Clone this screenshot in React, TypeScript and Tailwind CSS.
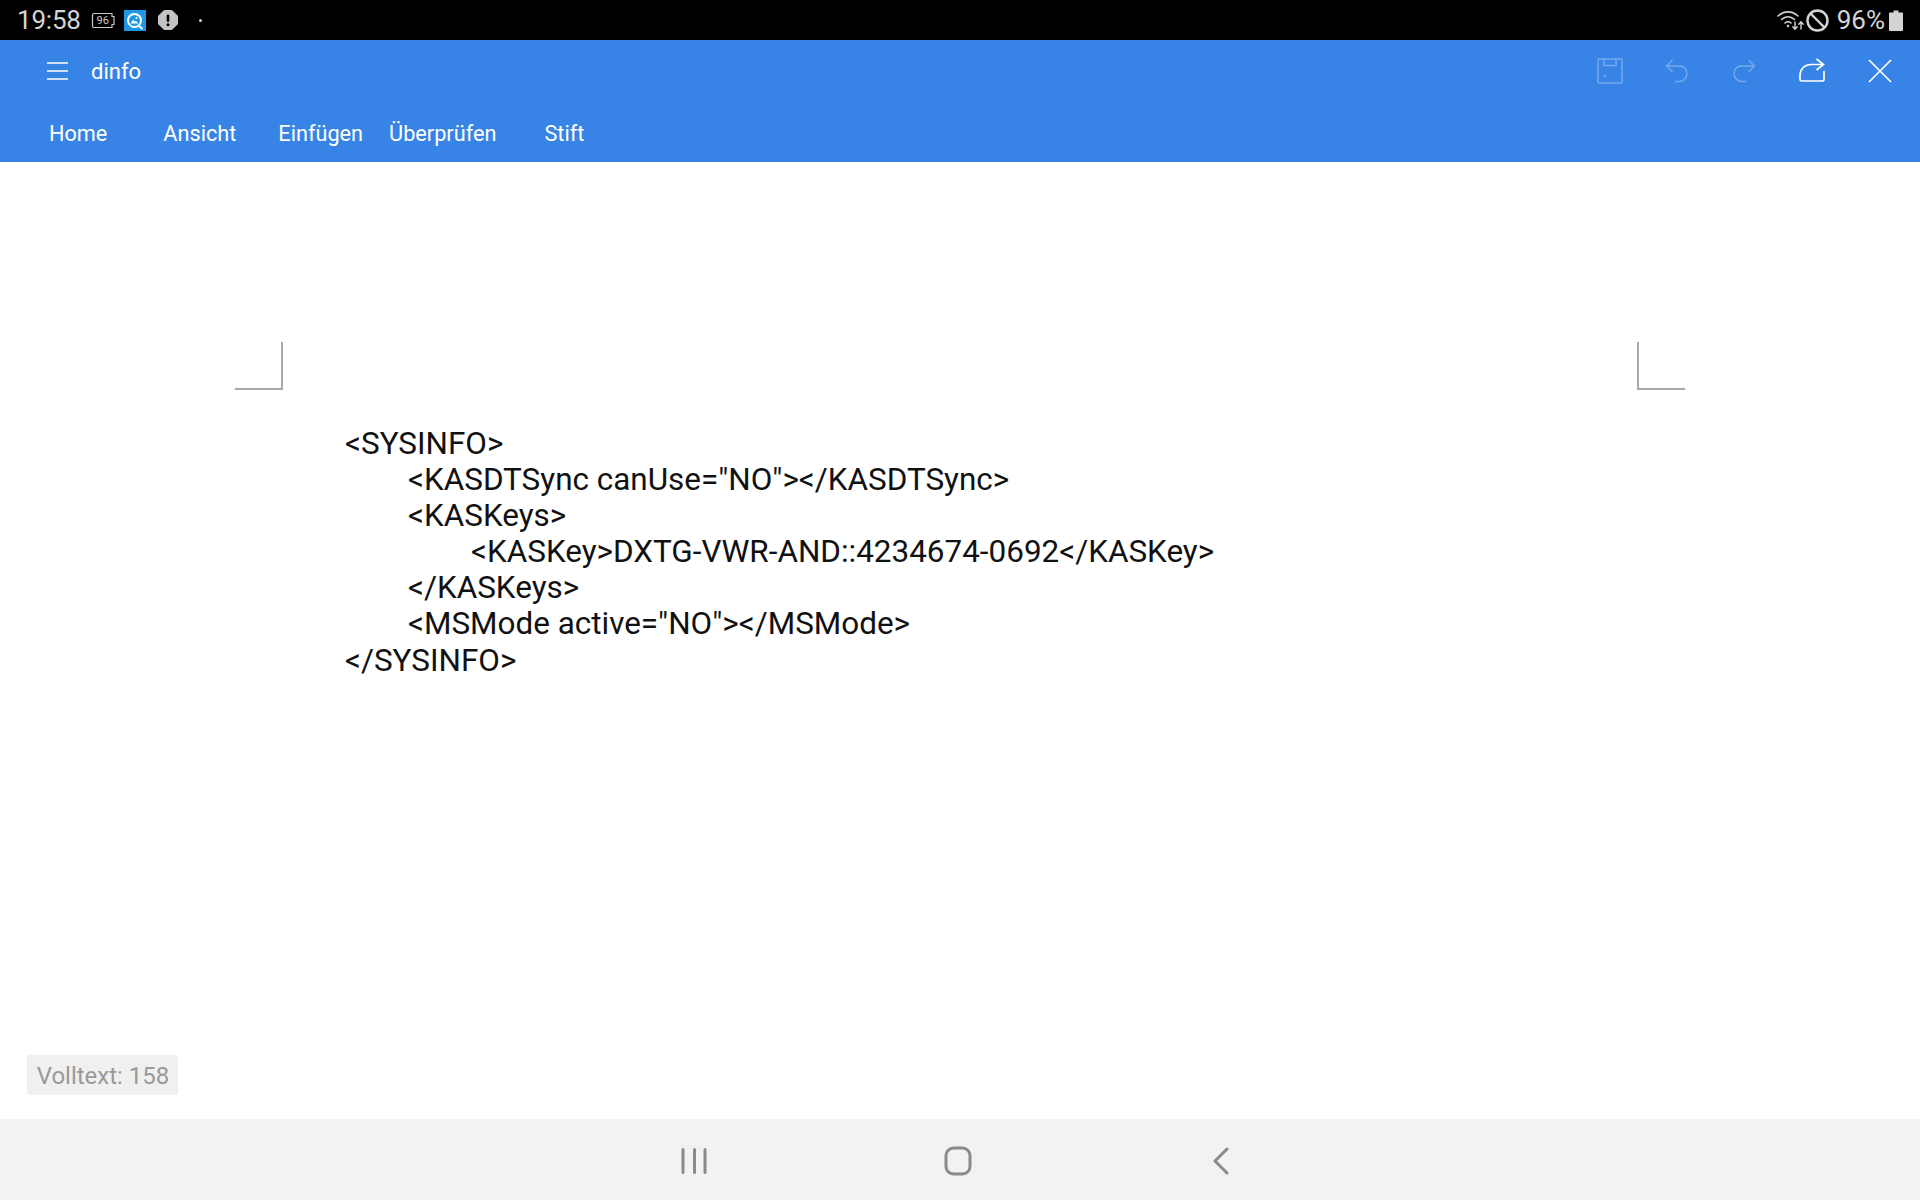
import React from "react";

const lines: [number, string][] = [
  [0, '<SYSINFO>'],
  [1, '<KASDTSync canUse="NO"></KASDTSync>'],
  [1, '<KASKeys>'],
  [2, '<KASKey>DXTG-VWR-AND::4234674-0692</KASKey>'],
  [1, '</KASKeys>'],
  [1, '<MSMode active="NO"></MSMode>'],
  [0, '</SYSINFO>'],
];

const indent = ["ml-0", "ml-[63px]", "ml-[126px]"];

function StatusLeft() {
  return (
    <div className="flex items-center">
      <span className="ml-[17px] text-[26px] leading-none text-[#d4d4d4] tracking-[-0.2px]">19:58</span>
      <svg className="ml-[10px]" width="25" height="17" viewBox="0 0 25 17" fill="none">
        <path d="M3 1.5H21V4.5H23V12.5H21V15.5H3a1.5 1.5 0 0 1-1.5-1.5V3A1.5 1.5 0 0 1 3 1.5Z" stroke="#c8c8c8" strokeWidth="1.2" />
      </svg>
      <span className="ml-[-22px] w-[18px] text-center text-[11px] leading-none text-[#c8c8c8]">96</span>
      <div className="ml-[12px] w-[22px] h-[21px] bg-[#1f97e6] flex items-center justify-center">
        <svg width="19" height="19" viewBox="0 0 19 19" fill="none">
          <circle cx="9.5" cy="9.5" r="7.5" fill="#fff" />
          <circle cx="9.5" cy="9.5" r="5.5" fill="#1f97e6" />
          <path d="M5.5 12.5 8.2 8.8l1.5 2 1-1.2 2.5 2.9Z" fill="#fff" />
          <circle cx="11.5" cy="7" r="1" fill="#fff" />
          <path d="M14 15l3.5 3" stroke="#fff" strokeWidth="2" />
        </svg>
      </div>
      <svg className="ml-[12px]" width="20" height="20" viewBox="0 0 20 20">
        <path d="M6 0.5H14L19.5 6V14L14 19.5H6L0.5 14V6Z" fill="#c4c4c4" stroke="#c4c4c4" strokeLinejoin="round" />
        <rect x="8.7" y="4.5" width="2.6" height="7.5" rx="1.2" fill="#000" />
        <circle cx="10" cy="14.8" r="1.5" fill="#000" />
      </svg>
      <div className="ml-[21px] w-[3px] h-[3px] rounded-full bg-[#d4d4d4]" />
    </div>
  );
}

function StatusRight() {
  return (
    <div className="flex items-center">
      <svg width="28" height="22" viewBox="0 0 28 22" fill="none" stroke="#d4d4d4" strokeLinecap="round">
        <path d="M1 7C7 1.5 15 1.5 21 7" strokeWidth="1.6" />
        <path d="M4.5 10.5C8.5 7 13.5 7 17.5 10.5" strokeWidth="1.6" />
        <path d="M8 14c2-1.6 4-1.6 6 0" strokeWidth="1.6" />
        <circle cx="11" cy="17" r="1.2" fill="#d4d4d4" stroke="none" />
        <path d="M18 13v7M15.8 17.8l2.2 2.4 2.2-2.4" strokeWidth="1.4" />
        <path d="M24 20v-7M21.8 15.2l2.2-2.4 2.2 2.4" strokeWidth="1.4" />
      </svg>
      <svg className="ml-[1px]" width="23" height="23" viewBox="0 0 23 23" fill="none" stroke="#d4d4d4" strokeWidth="2.4">
        <circle cx="11.5" cy="11.5" r="10" />
        <path d="M4.5 4.5 18.5 18.5" />
      </svg>
      <span className="ml-[8px] text-[26px] leading-none text-[#d4d4d4]">96%</span>
      <svg className="ml-[4px]" width="14" height="21" viewBox="0 0 14 21">
        <path d="M4.5 0.5h5v2H13a1 1 0 0 1 1 1V20a1 1 0 0 1-1 1H1a1 1 0 0 1-1-1V3.5a1 1 0 0 1 1-1h3.5Z" fill="#d4d4d4" />
      </svg>
    </div>
  );
}

function Toolbar() {
  return (
    <div className="flex items-center h-[62px]">
      <svg className="ml-[47px]" width="21" height="20" viewBox="0 0 21 20" stroke="#fff" strokeWidth="1.6">
        <path d="M0 2H21M0 10H21M0 18H21" />
      </svg>
      <span className="ml-[23px] text-[22px] leading-none text-white pt-[1px]">dinfo</span>
      <div className="ml-auto flex items-center mr-[27px] gap-[41.5px]">
        <svg width="26" height="26" viewBox="0 0 26 26" fill="none" stroke="#76a9ed" strokeWidth="1.5">
          <rect x="1" y="1" width="24" height="24" rx="1" />
          <path d="M7 1V7.5H19V1" />
          <circle cx="8" cy="18" r="0.6" />
        </svg>
        <svg className="-ml-[1px]" width="26" height="24" viewBox="0 0 26 24" fill="none" stroke="#76a9ed" strokeWidth="1.5">
          <path d="M3 7H15C20 7 23 10.5 23 14.5S20 22.5 15 22.5H11" />
          <path d="M8.5 1 2.5 7l6 6" />
        </svg>
        <svg width="26" height="24" viewBox="0 0 26 24" fill="none" stroke="#76a9ed" strokeWidth="1.5">
          <path d="M23 7H11C6 7 3 10.5 3 14.5S6 22.5 11 22.5H15" />
          <path d="M17.5 1 23.5 7l-6 6" />
        </svg>
        <svg className="-translate-y-[1px]" width="26" height="24" viewBox="0 0 26 24" fill="none" stroke="#fff" strokeWidth="1.7">
          <path d="M25 13V21.5A1.5 1.5 0 0 1 23.5 23H2.5A1.5 1.5 0 0 1 1 21.5V17C1 11 6 6.5 12 6.5H24" />
          <path d="M17.5 1 24.5 6.5 17.5 12" />
        </svg>
        <svg className="ml-[1px]" width="26" height="26" viewBox="0 0 26 26" fill="none" stroke="#fff" strokeWidth="1.7">
          <path d="M2 2 24 24M24 2 2 24" />
        </svg>
      </div>
    </div>
  );
}

export default function App() {
  return (
    <div className="w-[1920px] h-[1200px] flex flex-col bg-white overflow-hidden font-['Roboto',sans-serif]">
      <div className="h-[40px] bg-black flex items-center justify-between pr-[17px] shrink-0">
        <StatusLeft />
        <StatusRight />
      </div>
      <div className="h-[122px] bg-[#3884e6] shrink-0 flex flex-col">
        <Toolbar />
        <div className="flex items-center h-[60px] text-[21.7px] leading-none text-white pt-[4px]">
          <span className="ml-[49px]">Home</span>
          <span className="ml-[56px]">Ansicht</span>
          <span className="ml-[42px]">Einfügen</span>
          <span className="ml-[26px]">Überprüfen</span>
          <span className="ml-[48px]">Stift</span>
        </div>
      </div>
      <div className="flex-1 flex flex-col">
        <div className="flex justify-between mt-[180px] px-[235px]">
          <div className="w-[48px] h-[48px] border-r-2 border-b-2 border-[#a8a8a8]" />
          <div className="w-[48px] h-[48px] border-l-2 border-b-2 border-[#a8a8a8]" />
        </div>
        <div className="mt-[36px] pl-[345px] text-[31.45px] leading-[36.1px] text-[#111] whitespace-pre">
          {lines.map(([level, text], i) => (
            <div key={i} className={indent[level]}>{text}</div>
          ))}
        </div>
        <div className="mt-auto mb-[24px] ml-[27px] w-[151px] h-[40px] rounded-[3px] bg-[#f0f0f0] flex items-center justify-center text-[24px] leading-none text-[#999999] pt-[1px] pl-[1px]">
          Volltext: 158
        </div>
      </div>
      <div className="h-[81px] bg-[#f2f2f2] shrink-0 flex items-center pt-[3px]">
        <svg className="ml-[681px]" width="28" height="28" viewBox="0 0 28 28" stroke="#8a8a8a" strokeWidth="3" strokeLinecap="round">
          <path d="M2 2.5V25.5M13.5 2.5V25.5M24 2.5V25.5" />
        </svg>
        <svg className="ml-[235px]" width="28" height="30" viewBox="0 0 28 30" fill="none" stroke="#8a8a8a" strokeWidth="3">
          <rect x="2" y="2" width="24" height="26" rx="7.5" />
        </svg>
        <svg className="ml-[241px]" width="16" height="28" viewBox="0 0 16 28" fill="none" stroke="#8a8a8a" strokeWidth="3" strokeLinecap="round" strokeLinejoin="round">
          <path d="M14 2 2 14 14 26" />
        </svg>
      </div>
    </div>
  );
}
